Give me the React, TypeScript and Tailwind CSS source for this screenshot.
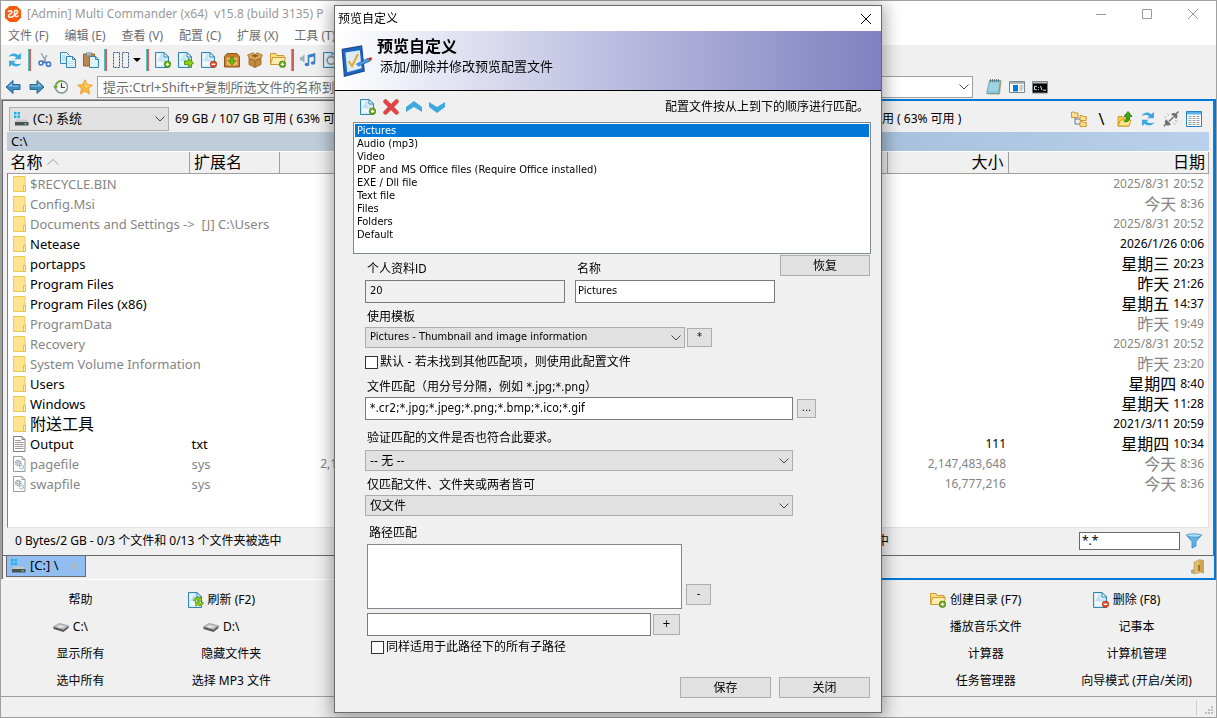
import { useState } from "react"
import type { ReactNode } from "react"

type IconProps = { children: ReactNode; size?: string }

function Svg({ children, size = "size-4" }: IconProps) {
    return (
        <svg viewBox="0 0 16 16" className={`${size} shrink-0`} fill="none" aria-hidden="true">
            {children}
        </svg>
    )
}

/* ---------- icons ---------- */

function Doc({ children }: { children?: ReactNode }) {
    return (
        <Svg>
            <path d="M.5 .5h8.500l4.500 4.500v10.500H.5z" fill="#d6ecf8" stroke="#2c86b8" />
            <path d="M2 2h5.500v5l4 1v5.500H2z" fill="#eef8fd" />
            <path d="M2 9l4-7h1.500v5l4 1v2z" fill="#c3e2f3" />
            <path d="M9 .5v4.500h4.500z" fill="#fff" stroke="#2c86b8" />
            {children}
        </Svg>
    )
}

function PlusBadge() {
    return (
        <>
            <circle cx="12.5" cy="12.3" r="3.3" fill="#5da70b" stroke="#3f8205" strokeWidth=".6" />
            <path d="M12.5 10.5v3.6M10.7 12.3h3.6" stroke="#fff" strokeWidth="1.3" />
        </>
    )
}

const DocPlus = () => <Doc><PlusBadge /></Doc>

const DocArrow = () => (
    <Doc>
        <path d="M6.5 9h4V6.3l5 4.7-5 4.600v-3h-4z" fill="#8fd414" stroke="#4b8d06" strokeWidth=".9" />
    </Doc>
)

const DocMinus = () => (
    <Doc>
        <circle cx="12.5" cy="12.3" r="3.3" fill="#e04a2c" stroke="#b52f17" strokeWidth=".6" />
        <path d="M10.7 12.3h3.6" stroke="#fff" strokeWidth="1.4" />
    </Doc>
)

const DocSearch = () => (
    <Doc>
        <circle cx="8" cy="8.500" r="3.8" fill="#e7f4fb" stroke="#8a979f" strokeWidth="1.5" />
        <path d="M11 11.500l3.600 3.600" stroke="#c78b45" strokeWidth="2.200" />
    </Doc>
)

const DocRefresh = () => (
    <Doc>
        <path d="M5.5 8.5c.5-3 4-4 6.200-2.300l1.300-1.500.8 4.500-4.300-.2 1.100-1.300C9 6.700 7.600 7.400 7.400 8.800z" fill="#8fd414" stroke="#4b8d06" strokeWidth=".7" />
        <path d="M15.500 10.500c-.5 3-4 4-6.200 2.300l-1.300 1.500-.8-4.500 4.300.2-1.100 1.300c1.600 1 3 .3 3.200-1.100z" fill="#8fd414" stroke="#4b8d06" strokeWidth=".7" />
    </Doc>
)

const Refresh = () => (
    <Svg>
        <path d="M1.500 4.800C4 1 8.500 .6 11.200 3.200L14 1v6.200H7.300l2-2C7 3.500 4 3.600 1.500 4.800z" fill="#3fa9dd" />
        <path d="M14.500 11.200C12 15 7.500 15.400 4.800 12.800L2 15V8.800h6.700l-2 2c2.300 1.700 5.300 1.600 7.800.4z" fill="#3fa9dd" />
    </Svg>
)

const Cut = () => (
    <Svg>
        <path d="M4.200 1l5 9M9.800 3.200L6.600 9.600" stroke="#94a3ad" strokeWidth="1.5" />
        <circle cx="4" cy="11" r="2" stroke="#3a74c4" strokeWidth="1.500" />
        <circle cx="11.500" cy="12.200" r="2.100" stroke="#3a74c4" strokeWidth="1.500" />
        <path d="M5.500 10l4.500 1" stroke="#3a74c4" strokeWidth="1.300" />
    </Svg>
)

const Copy = () => (
    <Svg>
        <path d="M.5 .5h6l3 3v8h-9z" fill="#e6f4fb" stroke="#2c86b8" />
        <path d="M2 4h3M2 6h4M2 8h4" stroke="#9fcde6" />
        <path d="M6.500 4.500h6l3 3v8h-9z" fill="#e6f4fb" stroke="#2c86b8" />
        <path d="M12.500 4.500v3h3" stroke="#2c86b8" />
        <path d="M8 9.500h5.500M8 11.500h5.500M8 13.500h5.500" stroke="#b9dbed" />
    </Svg>
)

const Paste = () => (
    <Svg>
        <path d="M.5 2h11v12H.5z" fill="#b98a4f" stroke="#8d6330" />
        <path d="M3.500 .8h5v3h-5z" fill="#b4babd" stroke="#7f878b" strokeWidth=".7" />
        <path d="M6.500 4.500h6l3 3v8h-9z" fill="#dff1fa" stroke="#2c86b8" />
        <path d="M12.500 4.500v3h3" stroke="#2c86b8" />
    </Svg>
)

const Marquee = () => (
    <Svg>
        <path d="M.5 .5h6v15h-6zM9.500 .5h6v15h-6z" stroke="#34507c" strokeDasharray="2 1" />
    </Svg>
)

const Archive = () => (
    <Svg>
        <path d="M3 1.500h10l2.500 3v10.500H.5V4.500z" fill="#c77b2c" stroke="#8c4f13" strokeWidth=".9" />
        <path d="M2.500 5.500h11v8h-11z" fill="#e7b765" />
        <path d="M6.700 5h2.600v3.500H12L8 13 4 8.500h2.700z" fill="#6cb90c" stroke="#3f7a05" strokeWidth=".7" />
    </Svg>
)

const OpenBox = () => (
    <Svg>
        <path d="M2 6.500l6 2 6-2v6l-6 3-6-3z" fill="#c58b3b" stroke="#8a5a1b" strokeWidth=".7" />
        <path d="M8 8.500v7" stroke="#8a5a1b" strokeWidth=".7" />
        <path d="M.7 3L6 .8l2 1.700L10 .8 15.300 3 14 6.200 9.500 8 8 6.300 6.500 8 2 6.200z" fill="#dba758" stroke="#8a5a1b" strokeWidth=".7" />
        <path d="M4 3.700L8 2.500l4 1.200-4 1.600z" fill="#8a5a1b" />
    </Svg>
)

const FolderPlus = () => (
    <Svg>
        <path d="M.5 12.500V1.500h5.500l1 2h7v2" fill="#f7dd86" stroke="#cf9a2e" />
        <path d="M.5 12.500l2-7h13l-2 7z" fill="#fdeeb0" stroke="#cf9a2e" />
        <PlusBadge />
    </Svg>
)

const Music = () => (
    <Svg>
        <path d="M0 5h2l2.500-3v9L2 8.500H0z" fill="#9fb0bb" />
        <path d="M8.500 12V3.500L14.500 2v8.500" stroke="#3c7fc7" strokeWidth="1.600" />
        <path d="M8.500 4.500l6-1.500" stroke="#3c7fc7" strokeWidth="2.500" />
        <ellipse cx="7" cy="12.500" rx="2.300" ry="1.800" fill="#3c7fc7" />
        <ellipse cx="13" cy="11" rx="2.200" ry="1.800" fill="#3c7fc7" />
    </Svg>
)

const Arrow = ({ flip }: { flip?: boolean }) => (
    <Svg>
        <g transform={flip ? "matrix(-1 0 0 1 16 0)" : undefined}>
            <path d="M1 8l7-6.500v4h7v5H8v4z" fill="#3f8ec0" stroke="#1d5f8c" strokeWidth=".9" />
            <path d="M3 7.500l4-3.700v2.700h7v1z" fill="#86c1e2" />
        </g>
    </Svg>
)

const Clock = () => (
    <Svg>
        <circle cx="8.500" cy="8" r="6" fill="#f3f7f2" stroke="#7e8c84" strokeWidth="1.300" />
        <path d="M2.500 9C2 4 6 1.500 9 2" stroke="#6cae3a" strokeWidth="1.800" />
        <path d="M0 7h5L2.500 10.500z" fill="#6cae3a" />
        <path d="M8.500 4v4.500H12" stroke="#444" strokeWidth="1.200" />
    </Svg>
)

const Star = () => (
    <Svg>
        <path d="M8 .7l2.200 4.900 5.300.5-4 3.500 1.200 5.500L8 12.300 3.300 15.100l1.200-5.500-4-3.500 5.300-.5z" fill="#fbb83c" stroke="#e89215" strokeWidth=".7" />
        <path d="M8 2.500l1.500 3.800 4 .4L8 9z" fill="#fdd780" />
    </Svg>
)

const Notepad = () => (
    <Svg>
        <path d="M4 1.500h11.500L14 15.500H2z" fill="#c0a56d" />
        <path d="M3.500 1.500h11L12.800 14.500H.6z" fill="#8cc8d9" stroke="#4a8fa5" strokeWidth=".6" />
        <path d="M4 5h9M3.500 7h9M3 9h9M2.500 11h9" stroke="#c9e7ef" strokeWidth=".7" />
        <path d="M4.500 0v3M6.500 0v3M8.500 0v3M10.500 0v3M12.500 0v3" stroke="#49616b" strokeWidth=".8" />
    </Svg>
)

const PreviewWin = () => (
    <Svg>
        <path d="M.5 2.500h15v11H.5z" fill="#fff" stroke="#7b8790" />
        <path d="M1 3h14v2H1z" fill="#aab4bb" />
        <path d="M4 6h5v6.500H4z" fill="#0078d7" />
        <path d="M10.500 7h4M10.500 9h4M10.500 11h3" stroke="#8b969d" />
    </Svg>
)

const Console = () => (
    <Svg>
        <path d="M.5 2.500h15v11.500H.5z" fill="#050505" stroke="#7b8790" />
        <path d="M1 3h14v1.500H1z" fill="#b4bcc2" />
        <path d="M4.800 7.300H2.500v3.400h2.300M6.500 8v.8M6.500 10v.8M8.500 7l1.500 4M11 11.200h3" stroke="#fff" strokeWidth=".9" />
    </Svg>
)

const Tree = () => (
    <Svg>
        <path d="M4 5v8h5M4 8h5" stroke="#58707d" strokeWidth=".9" />
        <path d="M.5 1h2.500l1 1h3v4.500H.5zM9 4.500h2.500l.8 1h3V9.500H9zM9 10.500h2.500l.8 1h3v4H9z" fill="#fadf8e" stroke="#c98d27" strokeWidth=".9" />
    </Svg>
)

const FolderUp = () => (
    <Svg>
        <path d="M1 15V5.500h4l1 1.500h6v8z" fill="#f5cc4c" stroke="#c7951c" strokeWidth=".9" />
        <path d="M1 15L3.500 9H14l-2 6z" fill="#fde68b" stroke="#c7951c" strokeWidth=".9" />
        <path d="M7 10.500c2.500-1 3-3 2.500-5H7l4-5 4 5h-2.500c.5 4-1.500 6-5.500 5z" fill="#3da81c" stroke="#207208" strokeWidth=".8" />
    </Svg>
)

const Plug = () => (
    <Svg>
        <path d="M.8 15.200l3-3M12.500 3.500l3-3" stroke="#77797b" strokeWidth="1.600" />
        <path d="M3 8.200l5 5c-1.700 1.700-4 1.700-5.200.5S1.300 9.900 3 8.200zM8.200 3l5 5c1.500-1.500 1.700-3.600.4-4.900C12.300 1.800 9.900 1.300 8.200 3z" fill="#6f7274" />
        <path d="M6 10.500l2.200-2.200M10.500 6L8.300 8.200" stroke="#6f7274" strokeWidth="1.500" />
        <path d="M4.500 2.500l1.500 2M1.500 5.500l2 1M10 11.500l2.500 2.500M12 9.500l2.500 1" stroke="#aaa" strokeWidth=".9" />
    </Svg>
)

const Columns = () => (
    <Svg>
        <path d="M.5 .5h15v15H.5z" fill="#fff" stroke="#2383c4" />
        <path d="M1 1h14v2.500H1z" fill="#59b1e5" />
        <path d="M2.500 5.500h3M6.500 5.500h3M10.500 5.500h3M2.500 7.500h3M6.500 7.500h3M10.500 7.500h3M2.500 9.500h3M6.500 9.500h3M10.500 9.500h3M2.500 11.500h3M6.500 11.500h3M10.500 11.500h3M2.500 13.500h3M6.500 13.500h3M10.500 13.500h3" stroke="#959fa6" />
    </Svg>
)

const WinDrive = () => (
    <Svg>
        <path d="M1 1h2.500v2.500H1zM4.500 1H7v2.500H4.500zM1 4.500h2.500V7H1zM4.500 4.500H7V7H4.500z" fill="#13b3ef" />
        <path d="M3.500 8.500h9.500l2 2.500H2z" fill="#c3c8cb" />
        <path d="M2 11h13.500v3.500H2z" fill="#4b5053" />
        <path d="M11.500 12.800h2" stroke="#5ff25f" strokeWidth="1.200" />
    </Svg>
)

const Disk = () => (
    <Svg>
        <path d="M.5 7.800L6 4.500 15.500 6.800l-5 4z" fill="#c4c4c4" stroke="#858585" strokeWidth=".6" />
        <path d="M.5 7.800v2.200l10 3v-2.200zM10.500 10.800v2.200l5-4V6.800z" fill="#5a5a5a" />
        <ellipse cx="7.500" cy="7.600" rx="3.200" ry="1.300" fill="#f2f2f2" stroke="#999" strokeWidth=".4" />
    </Svg>
)

const Folder = () => (
    <Svg>
        <path d="M.5 .5h11.500v15H.5z" fill="#ffe48f" stroke="#efcb54" />
        <path d="M10.500 9.500h2v6h-2z" fill="#ffeeb5" stroke="#e3b93d" strokeWidth=".9" />
    </Svg>
)

const TextFile = () => (
    <Svg>
        <path d="M.5 .5H9l3 3v12H.5z" fill="#fff" stroke="#808080" />
        <path d="M9 .5v3h3" stroke="#808080" />
        <path d="M2 4.500h6M2 6.500h8.500M2 8.500h8.500M2 10.500h8.500M2 12.500h8.500" stroke="#9b9b9b" />
    </Svg>
)

const SysFile = () => (
    <Svg>
        <path d="M.5 .5H9l3 3v12H.5z" fill="#fff" stroke="#9b9b9b" />
        <path d="M9 .5v3h3" stroke="#9b9b9b" />
        <circle cx="5.300" cy="7" r="2.600" stroke="#8e989d" strokeWidth="1.500" strokeDasharray="1.300 .7" />
        <circle cx="5.300" cy="7" r="1.300" stroke="#8e989d" strokeWidth=".8" />
        <circle cx="8.500" cy="11" r="1.900" stroke="#8cb4ce" strokeWidth="1.400" strokeDasharray="1.200 .6" />
    </Svg>
)

const Funnel = () => (
    <Svg>
        <path d="M.5 2h15L10 8.500V13l-4 2V8.500z" fill="#62b3e4" stroke="#2b84bd" strokeWidth=".8" />
        <ellipse cx="8" cy="2.500" rx="7.300" ry="1.700" fill="#b6def5" stroke="#2b84bd" strokeWidth=".7" />
    </Svg>
)

const FolderTab = () => (
    <Svg>
        <path d="M1 11l3-1v5l-3-1z" fill="#a9a9a9" />
        <path d="M4 3l6-2.500v13L4 15z" fill="#e0bb6b" stroke="#b18c42" strokeWidth=".5" />
        <path d="M10 .5l4 .5v13.500L10 13.500z" fill="#cda453" />
        <path d="M9 6v6" stroke="#6b5224" strokeWidth="1.200" />
    </Svg>
)

const Cross = () => (
    <Svg>
        <path d="M2.500 2.500l11 11M13.500 2.500l-11 11" stroke="#e04545" strokeWidth="4.500" strokeLinecap="round" />
    </Svg>
)

const Chevron = ({ down }: { down?: boolean }) => (
    <Svg>
        <path d={down ? "M0 3l8 5 8-5v5l-8 6-8-6z" : "M0 13l8-5 8 5V8L8 2 0 8z"} fill="#3fa9dd" />
    </Svg>
)

const ClipboardPen = () => (
    <Svg size="size-8">
        <path d="M.6 2.200L10.300 .5l1.300 12.500L1.700 15.600z" fill="#2166c2" stroke="#174a92" strokeWidth=".6" />
        <path d="M2.200 3.800l7.200-1.200.9 9-7.200 2z" fill="#dcebfa" />
        <path d="M3.800 8l1.700 2.500L8.500 4.500" stroke="#e5ab1e" strokeWidth="1" />
        <path d="M7.800 9.600l5.800-3 .8 1.500-5.600 2.400z" fill="#4aa0e6" stroke="#1c5ea6" strokeWidth=".4" />
        <path d="M13.600 6.600l1.500-.6.5 1.300-1.200.8z" fill="#c93a1d" />
    </Svg>
)

const Logo = () => (
    <Svg>
        <path d="M4.500 0h7L16 4v8l-4.500 4h-7L0 12V4z" fill="#fb5b0c" />
        <path d="M3.300 5.500c1.200-1 3.200-1.300 3.700.2.500 1.800-3.500 2.500-3.500 4.300 0 2 4 1.500 5.500-.5s-.5-3.500 1-4.700 3.300 0 2.500 1.600-2.800 2-2.500 3.300 2 1 3 .3" stroke="#fff" strokeWidth="1.500" strokeLinecap="round" />
    </Svg>
)

/* ---------- data ---------- */

type Row = {
    name: string
    ext?: string
    size?: string
    day: string
    time?: string
    dim?: boolean
    kind?: "txt" | "sys"
}

const files: Row[] = [
    { name: "$RECYCLE.BIN", day: "2025/8/31 20:52", dim: true },
    { name: "Config.Msi", day: "今天", time: "8:36", dim: true },
    { name: "Documents and Settings ->  [J] C:\\Users", day: "2025/8/31 20:52", dim: true },
    { name: "Netease", day: "2026/1/26 0:06" },
    { name: "portapps", day: "星期三", time: "20:23" },
    { name: "Program Files", day: "昨天", time: "21:26" },
    { name: "Program Files (x86)", day: "星期五", time: "14:37" },
    { name: "ProgramData", day: "昨天", time: "19:49", dim: true },
    { name: "Recovery", day: "2025/8/31 20:52", dim: true },
    { name: "System Volume Information", day: "昨天", time: "23:20", dim: true },
    { name: "Users", day: "星期四", time: "8:40" },
    { name: "Windows", day: "星期天", time: "11:28" },
    { name: "附送工具", day: "2021/3/11 20:59" },
    { name: "Output", ext: "txt", size: "111", day: "星期四", time: "10:34", kind: "txt" },
    { name: "pagefile", ext: "sys", size: "2,147,483,648", day: "今天", time: "8:36", dim: true, kind: "sys" },
    { name: "swapfile", ext: "sys", size: "16,777,216", day: "今天", time: "8:36", dim: true, kind: "sys" },
]

const menus = ["文件 (F)", "编辑 (E)", "查看 (V)", "配置 (C)", "扩展 (X)", "工具 (T)"]

const profiles = [
    "Pictures",
    "Audio (mp3)",
    "Video",
    "PDF and MS Office files (Require Office installed)",
    "EXE / Dll file",
    "Text file",
    "Files",
    "Folders",
    "Default",
]

type Command = { label: string; icon?: ReactNode } | null

const commands: Command[] = [
    { label: "帮助" }, { label: "刷新 (F2)", icon: <DocRefresh /> }, null, null, null, null,
    { label: "创建目录 (F7)", icon: <FolderPlus /> }, { label: "删除 (F8)", icon: <DocMinus /> },
    { label: "C:\\", icon: <Disk /> }, { label: "D:\\", icon: <Disk /> }, null, null, null, null,
    { label: "播放音乐文件" }, { label: "记事本" },
    { label: "显示所有" }, { label: "隐藏文件夹" }, null, null, null, null,
    { label: "计算器" }, { label: "计算机管理" },
    { label: "选中所有" }, { label: "选择 MP3 文件" }, null, null, null, null,
    { label: "任务管理器" }, { label: "向导模式 (开启/关闭)" },
]

/* ---------- small parts ---------- */

function Separator() {
    return <span className="mx-[2px] h-[22px] w-[3px] shrink-0 border-l border-r-2 border-l-[#4cc3c3] border-r-[#d0605c]" />
}

function IconButton({ label, children }: { label: string; children: ReactNode }) {
    return (
        <button type="button" aria-label={label} className="flex h-6 w-[23px] items-center justify-center">
            {children}
        </button>
    )
}

function Caret({ className = "" }: { className?: string }) {
    return (
        <svg viewBox="0 0 10 6" className={`pointer-events-none h-[6px] w-[10px] ${className}`} fill="none" aria-hidden="true">
            <path d="M.5 .5L5 5 9.500 .5" stroke="#444" />
        </svg>
    )
}

function Combo({ id, value, className }: { id: string; value: string; className: string }) {
    return (
        <div className={`relative ${className}`}>
            <select id={id} className="block h-[21px] w-full appearance-none border border-[#adadad] bg-[#e1e1e1] pl-1 pr-5">
                <option>{value}</option>
            </select>
            <Caret className="absolute right-1 top-2" />
        </div>
    )
}

function PushButton({ children, className, label }: { children: ReactNode; className: string; label?: string }) {
    return (
        <button type="button" aria-label={label} className={`flex shrink-0 items-center justify-center border border-[#adadad] bg-[#e1e1e1] ${className}`}>
            {children}
        </button>
    )
}

/* ---------- file panel ---------- */

function FileIcon({ kind }: { kind?: Row["kind"] }) {
    if (kind === "txt") return <TextFile />
    if (kind === "sys") return <SysFile />
    return <Folder />
}

type PanelProps = { id: string; active?: boolean; names?: boolean; dates?: boolean }

function Panel({ id, active, names, dates }: PanelProps) {
    return (
        <section
            className={`flex min-w-0 flex-1 flex-col ${active ? "border-2 border-[#0078d7]" : "border-b border-l border-t border-b-white border-l-[#a0a0a0] border-t-[#a0a0a0]"}`}
        >
            <div className={`flex flex-1 flex-col border-x border-b border-[#696969] px-1 ${active ? "" : "border-t"}`}>
                <div className="flex h-[31px] items-center gap-[6px] pt-1">
                    <div className="relative ml-[2px] w-40">
                        <select aria-label="驱动器" className="block h-6 w-full appearance-none border border-[#adadad] bg-[#e1e1e1] pl-[23px] text-[13px]">
                            <option>(C:) 系统</option>
                        </select>
                        <span className="pointer-events-none absolute left-1 top-1"><WinDrive /></span>
                        <Caret className="absolute right-1 top-[9px]" />
                    </div>
                    <span className="whitespace-nowrap text-xs">69 GB / 107 GB 可用 ( 63% 可用 )</span>
                    {dates && (
                        <div className="ml-auto flex items-center pr-1">
                            <IconButton label="目录树"><Tree /></IconButton>
                            <IconButton label="根目录"><span className="text-base">\</span></IconButton>
                            <IconButton label="上级目录"><FolderUp /></IconButton>
                            <IconButton label="刷新"><Refresh /></IconButton>
                            <IconButton label="断开连接"><Plug /></IconButton>
                            <IconButton label="列视图"><Columns /></IconButton>
                        </div>
                    )}
                </div>

                <div className={`h-5 border-b border-white bg-gradient-to-r pl-1 text-[13px] leading-[18px] ${active ? "from-[#99b4d1] to-[#b9d1ea]" : "from-[#bfcddb] to-[#bfcddb]"}`}>
                    {names && "C:\\"}
                </div>

                <table className="w-full table-fixed border-collapse">
                    <colgroup>
                        <col className="w-[182px]" />
                        <col className="w-[90px]" />
                        <col className="w-[121px]" />
                        <col />
                    </colgroup>
                    <thead>
                        <tr className="h-[21px] border-b border-[#a0a0a0] text-base leading-5">
                            <th className="border-r border-[#a0a0a0] pl-[3px] text-left font-normal">
                                {names && (
                                    <span className="flex items-center gap-1">
                                        名称
                                        <svg viewBox="0 0 12 6" className="h-[6px] w-3" fill="none" aria-hidden="true">
                                            <path d="M.5 5.500L6 .5l5.500 5" stroke="#a0a0a0" />
                                        </svg>
                                    </span>
                                )}
                            </th>
                            <th className="border-r border-[#a0a0a0] pl-1 text-left font-normal">{names && "扩展名"}</th>
                            <th className="border-r border-[#a0a0a0] pr-1 text-right font-normal">{dates && "大小"}</th>
                            <th className="border-r border-[#a0a0a0] pr-[3px] text-right font-normal">{dates && "日期"}</th>
                        </tr>
                    </thead>
                    <tbody className="bg-white">
                        {files.map((f) => (
                            <tr key={f.name} className={`h-5 text-[13px] leading-5 ${f.dim ? "text-[#858585]" : "text-black"}`}>
                                <td className="border-l border-[#828282] p-0 pl-[5px]">
                                    {names && (
                                        <span className="flex h-5 items-center gap-px whitespace-pre">
                                            <FileIcon kind={f.kind} />
                                            <span className={f.name === "附送工具" ? "text-base leading-5" : ""}>{f.name}</span>
                                        </span>
                                    )}
                                </td>
                                <td className="p-0 pl-[2px]">{names && f.ext}</td>
                                <td className="p-0 pr-[2px] text-right text-xs leading-5">{f.size}</td>
                                <td className="border-r border-[#e3e3e3] p-0 pr-1">
                                    {dates && (
                                        <span className="flex h-5 items-center justify-end gap-1 text-xs leading-5">
                                            <span className={f.time ? "text-base leading-5" : ""}>{f.day}</span>
                                            {f.time && <span>{f.time}</span>}
                                        </span>
                                    )}
                                </td>
                            </tr>
                        ))}
                    </tbody>
                </table>
                <div className="flex-1 border border-t-0 border-[#e3e3e3] border-l-[#828282] bg-white" />

                <div className="flex h-[27px] items-center pb-[2px] pl-2">
                    <span className="whitespace-nowrap text-xs">0 Bytes/2 GB - 0/3 个文件和 0/13 个文件夹被选中</span>
                    {dates && (
                        <div className="ml-auto flex items-center gap-[6px] pr-[7px]">
                            <input id={`${id}-filter`} aria-label="筛选" defaultValue="*.*" className="h-[18px] w-[101px] border border-[#696969] bg-white px-[2px] text-xs leading-4" />
                            <Funnel />
                        </div>
                    )}
                </div>
            </div>

            <div className={`flex items-start pr-2 ${active ? "h-[22px]" : "h-[23px] border-l border-[#696969]"}`}>
                {names && (
                    <div className="ml-[3px] flex h-[21px] items-center border border-t-0 border-[#696969] bg-[#91bdf0] px-[3px] text-[13px]">
                        <WinDrive />
                        <span className="ml-1 w-9">[C:] \</span>
                        <button type="button" aria-label="关闭标签" className="flex w-4 justify-center">
                            <svg viewBox="0 0 8 8" className="size-2" fill="none" aria-hidden="true">
                                <path d="M1 1l6 6M7 1L1 7" stroke="#b9b4ac" strokeWidth="1.500" />
                            </svg>
                        </button>
                    </div>
                )}
                <span className="ml-auto pt-[3px]"><FolderTab /></span>
            </div>
        </section>
    )
}

/* ---------- dialog ---------- */

function PreviewDialog() {
    const [selected, setSelected] = useState(0)

    return (
        <div className="pointer-events-none fixed inset-0 flex items-center justify-center pr-px">
            <div
                role="dialog"
                aria-label="预览自定义"
                className="pointer-events-auto w-[548px] border border-[#6b6b6b] bg-[#f0f0f0] font-['DejaVu_Sans_Condensed','Noto_Sans_CJK_SC',sans-serif] text-[11px] text-black shadow-[0_3px_16px_3px_rgba(0,0,0,0.35)]"
            >
                <div className="flex h-[25px] items-center justify-between bg-white pl-[3px] pr-[9px] text-xs">
                    <span>预览自定义</span>
                    <button type="button" aria-label="关闭窗口">
                        <svg viewBox="0 0 12 12" className="size-3" fill="none" aria-hidden="true">
                            <path d="M1 1l10 10M11 1L1 11" stroke="#000" />
                        </svg>
                    </button>
                </div>

                <header className="flex h-[60px] items-center gap-1 border-b border-black bg-gradient-to-r from-white to-[#8080c0] pl-[6px]">
                    <ClipboardPen />
                    <div className="mb-2">
                        <h2 className="text-base font-bold leading-5">预览自定义</h2>
                        <p className="pl-[3px] text-[13px] leading-5">添加/删除并修改预览配置文件</p>
                    </div>
                </header>

                <div className="pl-[18px] pr-[10px] pt-[2px]">
                    <div className="mb-[2px] flex h-[27px] items-center justify-between pl-[3px] pr-[2px]">
                        <div className="flex">
                            <IconButton label="新建"><DocPlus /></IconButton>
                            <IconButton label="删除"><Cross /></IconButton>
                            <IconButton label="上移"><Chevron /></IconButton>
                            <IconButton label="下移"><Chevron down /></IconButton>
                        </div>
                        <span className="text-xs">配置文件按从上到下的顺序进行匹配。</span>
                    </div>

                    <ul role="listbox" aria-label="配置文件" className="h-[132px] border border-[#828790] bg-white p-px">
                        {profiles.map((p, i) => (
                            <li
                                key={p}
                                role="option"
                                aria-selected={i === selected}
                                onClick={() => setSelected(i)}
                                className={`px-[2px] leading-[13px] ${i === selected ? "bg-[#0078d7] text-white" : ""}`}
                            >
                                {p}
                            </li>
                        ))}
                    </ul>

                    <div className="flex items-start pl-3 pt-px">
                        <div className="flex w-[210px] shrink-0 flex-col">
                            <label htmlFor="pid" className="pl-[2px] pt-1 text-xs leading-5">个人资料ID</label>
                            <input id="pid" readOnly defaultValue="20" className="mt-px h-[23px] w-[200px] border border-[#7a7a7a] bg-[#f0f0f0] px-1 pb-[2px]" />
                        </div>
                        <div className="flex w-[205px] shrink-0 flex-col">
                            <label htmlFor="pname" className="pl-[2px] pt-1 text-xs leading-5">名称</label>
                            <input id="pname" defaultValue="Pictures" className="mt-px h-[23px] w-[200px] border border-[#7a7a7a] bg-white px-[2px] pb-[2px]" />
                        </div>
                        <PushButton className="h-[21px] w-[90px] text-xs">恢复</PushButton>
                    </div>

                    <div className="pl-3">
                        <label htmlFor="tpl" className="mt-1 block pl-[2px] text-xs leading-5">使用模板</label>
                        <div className="flex items-center gap-[2px]">
                            <Combo id="tpl" value="Pictures - Thumbnail and image information" className="w-80" />
                            <PushButton className="h-[19px] w-[25px]" label="编辑模板">*</PushButton>
                        </div>

                        <label className="mt-1 flex h-5 items-center gap-[2px] text-xs">
                            <input type="checkbox" className="size-[13px] appearance-none border border-[#333] bg-white" />
                            默认 - 若未找到其他匹配项，则使用此配置文件
                        </label>

                        <label htmlFor="match" className="mt-[5px] block pl-[2px] text-xs leading-5">文件匹配（用分号分隔，例如 *.jpg;*.png）</label>
                        <div className="flex items-center gap-1">
                            <input id="match" defaultValue="*.cr2;*.jpg;*.jpeg;*.png;*.bmp;*.ico;*.gif" className="h-[23px] w-[428px] border border-[#7a7a7a] bg-white px-1 pb-[2px] text-xs" />
                            <PushButton className="size-[19px]" label="浏览">...</PushButton>
                        </div>

                        <label htmlFor="verify" className="mt-2 block pl-[2px] text-xs leading-5">验证匹配的文件是否也符合此要求。</label>
                        <Combo id="verify" value="-- 无 --" className="mt-[2px] w-[428px] text-xs" />

                        <label htmlFor="scope" className="mt-1 block pl-[2px] text-xs leading-5">仅匹配文件、文件夹或两者皆可</label>
                        <Combo id="scope" value="仅文件" className="w-[428px] text-xs" />

                        <label htmlFor="paths" className="mt-[7px] block pl-1 text-xs leading-5">路径匹配</label>
                        <div className="mt-px flex items-end gap-1 pl-[2px]">
                            <textarea id="paths" className="h-[65px] w-[315px] resize-none border border-[#828790] bg-white" />
                            <PushButton className="mb-1 h-[21px] w-[25px]">-</PushButton>
                        </div>
                        <div className="mt-1 flex items-center gap-[2px] pl-[2px]">
                            <input aria-label="新路径" className="h-[23px] w-[284px] border border-[#7a7a7a] bg-white px-1" />
                            <PushButton className="h-[21px] w-[27px]">+</PushButton>
                        </div>
                        <label className="mt-px flex h-5 items-center gap-[2px] pl-[6px] text-xs">
                            <input type="checkbox" className="size-[13px] appearance-none border border-[#333] bg-white" />
                            同样适用于此路径下的所有子路径
                        </label>
                    </div>

                    <div className="mt-5 flex justify-end gap-2 pb-[14px] pr-px">
                        <PushButton className="h-[21px] w-[91px] text-xs">保存</PushButton>
                        <PushButton className="h-[21px] w-[91px] text-xs">关闭</PushButton>
                    </div>
                </div>
            </div>
        </div>
    )
}

/* ---------- main window ---------- */

export default function App() {
    return (
        <div className="flex min-h-screen flex-col border border-[#a0a0a0] bg-[#f0f0f0] font-['Noto_Sans','Noto_Sans_CJK_SC',sans-serif] text-xs text-black">
            <header className="flex h-[26px] items-center bg-white pl-1 text-[#999]">
                <Logo />
                <h1 className="ml-[6px] flex-1 whitespace-pre text-xs">[Admin] Multi Commander (x64)  v15.8 (build 3135) P</h1>
                <button type="button" aria-label="最小化" className="flex w-[46px] justify-center">
                    <svg viewBox="0 0 12 12" className="size-3" fill="none" aria-hidden="true"><path d="M1 6.500h10" stroke="#999" /></svg>
                </button>
                <button type="button" aria-label="最大化" className="flex w-[46px] justify-center">
                    <svg viewBox="0 0 12 12" className="size-3" fill="none" aria-hidden="true"><path d="M1.500 1.500h9v9h-9z" stroke="#999" /></svg>
                </button>
                <button type="button" aria-label="关闭" className="flex w-[46px] justify-center">
                    <svg viewBox="0 0 12 12" className="size-3" fill="none" aria-hidden="true"><path d="M1 1l10 10M11 1L1 11" stroke="#999" /></svg>
                </button>
            </header>

            <nav className="flex h-[18px] items-center gap-4 bg-white pl-[7px] text-[#6d6d6d]">
                {menus.map((m) => (
                    <button key={m} type="button" className="whitespace-nowrap leading-[18px]">{m}</button>
                ))}
            </nav>

            <div className="flex h-[30px] items-center pl-[2px]">
                <IconButton label="刷新"><Refresh /></IconButton>
                <Separator />
                <IconButton label="剪切"><Cut /></IconButton>
                <IconButton label="复制"><Copy /></IconButton>
                <IconButton label="粘贴"><Paste /></IconButton>
                <Separator />
                <button type="button" aria-label="选择" className="flex h-6 w-[35px] items-center justify-center gap-1">
                    <Marquee />
                    <svg viewBox="0 0 8 4" className="h-1 w-2" aria-hidden="true"><path d="M0 0h8L4 4z" fill="#000" /></svg>
                </button>
                <Separator />
                <IconButton label="新建文件"><DocPlus /></IconButton>
                <IconButton label="移动"><DocArrow /></IconButton>
                <IconButton label="删除文件"><DocMinus /></IconButton>
                <IconButton label="打包"><Archive /></IconButton>
                <IconButton label="解包"><OpenBox /></IconButton>
                <IconButton label="新建目录"><FolderPlus /></IconButton>
                <Separator />
                <IconButton label="音乐"><Music /></IconButton>
                <IconButton label="查找"><DocSearch /></IconButton>
            </div>

            <div className="flex h-6 items-center">
                <div className="flex w-24 justify-between pr-px">
                    <IconButton label="后退"><Arrow /></IconButton>
                    <IconButton label="前进"><Arrow flip /></IconButton>
                    <IconButton label="历史"><Clock /></IconButton>
                    <IconButton label="收藏"><Star /></IconButton>
                </div>
                <div className="relative min-w-0 flex-1">
                    <input aria-label="命令" defaultValue="提示:Ctrl+Shift+P复制所选文件的名称到" className="block h-[22px] w-full border border-[#a0a0a0] bg-white px-[5px] pb-[2px] text-[13px] text-[#6d6d6d]" />
                    <Caret className="absolute right-1 top-2" />
                </div>
                <div className="flex w-[243px] pl-[9px]">
                    <IconButton label="记事本"><Notepad /></IconButton>
                    <IconButton label="预览"><PreviewWin /></IconButton>
                    <IconButton label="命令行"><Console /></IconButton>
                </div>
            </div>

            <main className="flex flex-1 gap-px">
                <Panel id="left" names />
                <Panel id="right" dates active />
            </main>

            <div className="grid grid-cols-8 px-1 pb-[2px] pt-[6px]">
                {commands.map((c, i) =>
                    c ? (
                        <button key={i} type="button" className="flex h-[27px] items-center justify-center whitespace-nowrap">
                            <span className="relative">
                                {c.icon && <span className="absolute right-full top-0 mr-1">{c.icon}</span>}
                                {c.label}
                            </span>
                        </button>
                    ) : (
                        <span key={i} />
                    )
                )}
            </div>

            <footer className="flex h-[21px] justify-end border-t border-[#a0a0a0]">
                <span className="mt-[3px] h-4 border-l border-[#d0d0d0]" />
                <svg viewBox="0 0 19 19" className="size-[19px]" aria-hidden="true">
                    <path d="M14 9h2v2h-2zM11 12h2v2h-2zM14 12h2v2h-2zM8 15h2v2H8zM11 15h2v2h-2zM14 15h2v2h-2z" fill="#bdbdbd" />
                </svg>
            </footer>

            <PreviewDialog />
        </div>
    )
}
